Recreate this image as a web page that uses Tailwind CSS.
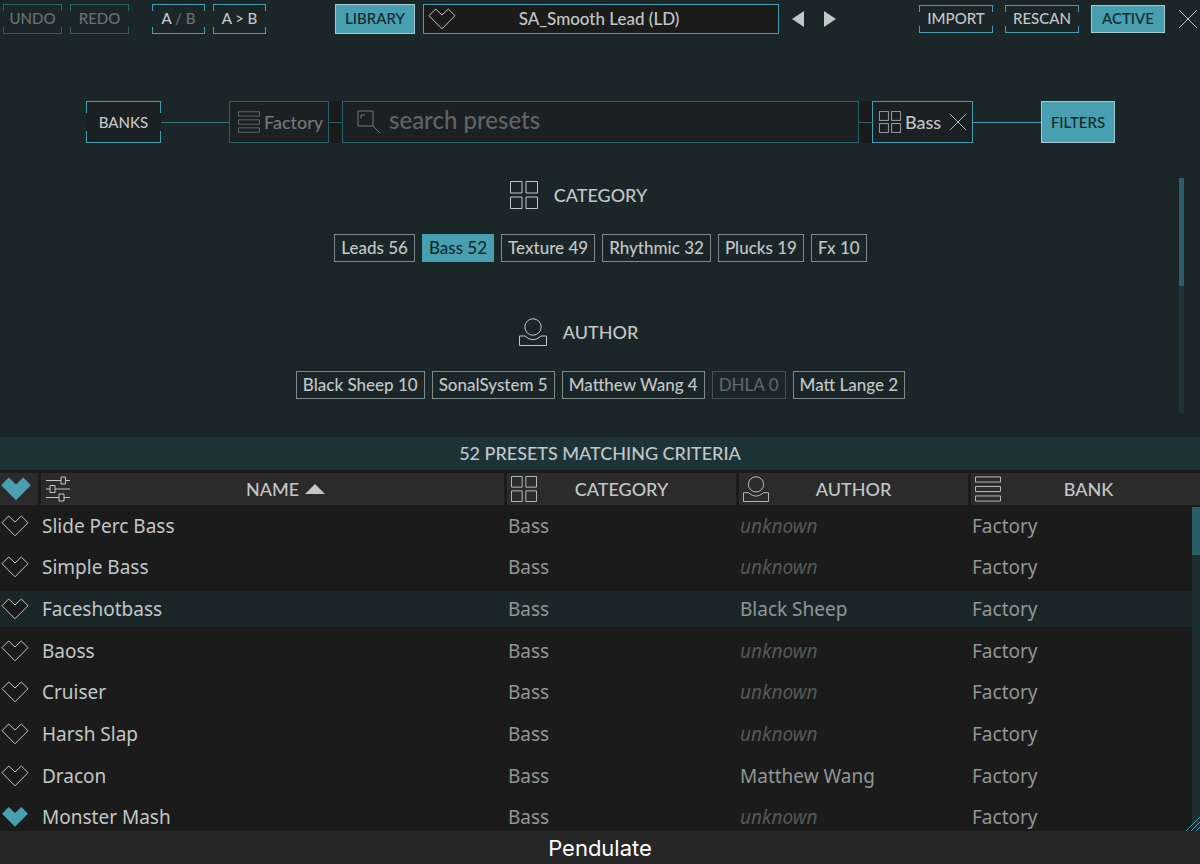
<!DOCTYPE html>
<html lang="en">
<head>
    <meta charset="UTF-8">
    <meta name="viewport" content="width=device-width, initial-scale=1.0">
    <title>Pendulate</title>
    <script src="https://cdn.jsdelivr.net/npm/@tailwindcss/browser@4"></script>
</head>
<body class="h-screen flex flex-col overflow-hidden bg-[#1a2628] text-[#c3c7c7] font-medium font-['Lato',sans-serif]">

    <!-- Icons -->
    <svg class="hidden">
        <symbol id="icon-heart" viewBox="0 0 28 22"><path d="M1 7.7 7.7 1 14 7 20.3 1 27 7.7 14 20.8Z" /></symbol>
        <symbol id="icon-category" viewBox="0 0 28 28"><path d="M.5 .5h11.5v11.5H.5zM16 .5h11.5v11.5H16zM.5 16h11.5v11.5H.5zM16 16h11.5v11.5H16z" /></symbol>
        <symbol id="icon-author" viewBox="0 0 28 28"><circle cx="14" cy="9" r="8.2" /><path d="M.5 18H6Q14 25.500 22 18h5.500v9.500H.5Z" /></symbol>
        <symbol id="icon-bank" viewBox="0 0 28 28"><path d="M.5 1h27v5.500H.5zM.5 11.250h27v5.500H.5zM.5 21.500h27v5.500H.5z" /></symbol>
        <symbol id="icon-sliders" viewBox="0 0 26 26"><path d="M1 4.500h15M20.500 4.500H25M16 1h4.500v7H16zM1 13h4M10 13h15M5 9.500h5v7H5zM1 21.500h13M19 21.500h6M14 18h5v7h-5z" /></symbol>
        <symbol id="icon-close" viewBox="0 0 20 20"><path d="M1 1 19 19M19 1 1 19" /></symbol>
    </svg>

    <!-- Top bar -->
    <header class="flex items-center h-[37px] pl-[3px] text-[15px] leading-5">
        <div class="flex gap-2">
            <button disabled class="relative isolate w-[59px] h-[30px] pb-0.5 border border-[#2b5f68] text-[#697273] before:absolute before:-z-10 before:-inset-x-px before:inset-y-[6px] before:bg-[#1a2628]">UNDO</button>
            <button disabled class="relative isolate w-[59px] h-[30px] pb-0.5 border border-[#2b5f68] text-[#697273] before:absolute before:-z-10 before:-inset-x-px before:inset-y-[6px] before:bg-[#1a2628]">REDO</button>
        </div>
        <div class="flex gap-2 ml-[23px]">
            <button class="relative isolate w-[53px] h-[30px] pb-0.5 border border-[#489fb0] before:absolute before:-z-10 before:-inset-x-px before:inset-y-[6px] before:bg-[#1a2628]">A <span class="text-[#697273]">/ B</span></button>
            <button class="relative isolate w-[53px] h-[30px] pb-0.5 border border-[#489fb0] before:absolute before:-z-10 before:-inset-x-px before:inset-y-[6px] before:bg-[#1a2628]">A &gt; B</button>
        </div>
        <button class="ml-[69px] w-20 h-[30px] pb-0.5 border border-[#a9c9cf] bg-[#489fb0] text-[#12292e]">LIBRARY</button>
        <div class="flex-1 flex items-center ml-2 h-[30px] px-1 border border-[#489fb0] bg-[#1b1b1b]">
            <button aria-label="Favourite"><svg class="w-7 h-[22px] fill-none stroke-current"><use href="#icon-heart" /></svg></button>
            <span class="flex-1 pr-8 text-center text-[17px] leading-6">SA_Smooth Lead (LD)</span>
        </div>
        <button aria-label="Previous preset" class="ml-[13px]"><svg class="w-3 h-4 fill-current" viewBox="0 0 12 16"><path d="M12 0v16L0 8z" /></svg></button>
        <button aria-label="Next preset" class="ml-5"><svg class="w-3 h-4 fill-current" viewBox="0 0 12 16"><path d="M0 0v16l12-8z" /></svg></button>
        <div class="flex gap-3 ml-[83px]">
            <button class="relative isolate w-[74px] h-7 pb-0.5 border border-[#489fb0] before:absolute before:-z-10 before:-inset-x-px before:inset-y-[6px] before:bg-[#1a2628]">IMPORT</button>
            <button class="relative isolate w-[74px] h-7 pb-0.5 border border-[#489fb0] before:absolute before:-z-10 before:-inset-x-px before:inset-y-[6px] before:bg-[#1a2628]">RESCAN</button>
            <button class="w-[74px] h-7 pb-0.5 border border-[#a9c9cf] bg-[#489fb0] text-[#12292e]">ACTIVE</button>
        </div>
        <button aria-label="Close" class="ml-[13px] mr-0.5"><svg class="w-5 h-5 fill-none stroke-current"><use href="#icon-close" /></svg></button>
    </header>

    <!-- Search row -->
    <div class="flex items-center mt-16 pl-[86px] pr-[85px]">
        <button class="relative isolate w-[75px] h-[42px] border border-[#489fb0] bg-[#1b2022] text-[15px] before:absolute before:-z-10 before:-inset-x-px before:inset-y-[11px] before:bg-[#1b2022]">BANKS</button>
        <div class="w-[68px] h-px bg-[#37757f]"></div>
        <button class="flex items-center gap-1 w-[100px] h-[42px] pl-2 border border-[#2b5f68] bg-[#1b2022] text-[#737878] text-lg">
            <svg class="shrink-0 size-[22px] fill-none stroke-current"><use href="#icon-bank" /></svg>Factory
        </button>
        <div class="flex items-center w-[13px] h-[42px] bg-[#1b1b1b]"><div class="w-full h-px bg-[#2b5f68]"></div></div>
        <label class="flex-1 flex items-center h-[42px] pl-3.5 border border-[#2b5f68] bg-[#1b2022] text-[#737878]">
            <svg class="shrink-0 size-6 fill-none stroke-current" viewBox="0 0 24 24"><path d="M1 1h15v15H1zM16 16l7 7M4 8.500V5h4" /></svg>
            <input type="text" placeholder="search presets" aria-label="Search presets" class="flex-1 min-w-0 ml-2 pb-1 bg-transparent text-2xl outline-none placeholder:text-[#5f6566]">
        </label>
        <div class="flex items-center w-[13px] h-[42px] bg-[#1b1b1b]"><div class="w-full h-px bg-[#2b5f68]"></div></div>
        <button class="flex items-center gap-1 w-[101px] h-[42px] pl-1.5 border border-[#489fb0] bg-[#1b2022] text-lg">
            <svg class="shrink-0 size-[22px] fill-none stroke-current"><use href="#icon-category" /></svg>Bass
            <svg class="shrink-0 ml-1 size-[18px] fill-none stroke-current"><use href="#icon-close" /></svg>
        </button>
        <div class="w-[68px] h-px bg-[#489fb0]"></div>
        <button class="w-[74px] h-[42px] border border-[#a9c9cf] bg-[#489fb0] text-[#12292e] text-[15px]">FILTERS</button>
    </div>

    <!-- Filters -->
    <div class="flex mt-[35px] mb-6">
        <div class="flex-1 pl-[22px] h-[235px]">
            <section class="h-[137px]">
                <h2 class="flex items-center justify-center gap-4 h-[34px] pr-11 text-lg">
                    <svg class="size-7 fill-none stroke-current"><use href="#icon-category" /></svg>CATEGORY
                </h2>
                <div id="category-chips" class="flex justify-center gap-[7px] mt-[22px]"></div>
            </section>
            <section>
                <h2 class="flex items-center justify-center gap-4 h-[34px] pr-11 text-lg">
                    <svg class="size-7 fill-none stroke-current"><use href="#icon-author" /></svg>AUTHOR
                </h2>
                <div id="author-chips" class="flex justify-center gap-[7px] mt-[22px]"></div>
            </section>
        </div>
        <div class="w-[5px] mr-4 bg-[#1e3337]"><div class="h-[108px] bg-[#2b5f68]"></div></div>
    </div>

    <p class="h-[33px] bg-[#1e3337] text-center text-lg leading-[33px]">52 PRESETS MATCHING CRITERIA</p>

    <!-- Preset list -->
    <main class="relative flex-1 min-h-0 overflow-hidden bg-[#1b1b1b]">
        <table class="w-full h-[368px] table-fixed border-separate border-spacing-0">
            <thead class="text-lg">
                <tr class="h-[35px]">
                    <th class="w-[38px] p-0 border-t-3 border-[#1b1b1b] bg-[#2b2b2b]">
                        <button aria-label="Favourites" class="block"><svg class="w-8 h-[26px] fill-[#489fb0]" viewBox="0 0 28 22"><use href="#icon-heart" /></svg></button>
                    </th>
                    <th class="p-0 border-t-3 border-l-3 border-[#1b1b1b] bg-[#2b2b2b] font-medium">
                        <div class="flex items-center pl-1">
                            <svg class="size-[26px] fill-none stroke-current"><use href="#icon-sliders" /></svg>
                            <button class="flex-1 flex items-center justify-center gap-1.5 pr-1">NAME <svg class="w-5 h-2.5 fill-current" viewBox="0 0 20 10"><path d="M10 0 20 10H0z" /></svg></button>
                        </div>
                    </th>
                    <th class="w-[232px] p-0 border-t-3 border-l-3 border-[#1b1b1b] bg-[#2b2b2b] font-medium">
                        <div class="flex items-center pl-1">
                            <svg class="size-[26px] fill-none stroke-current"><use href="#icon-category" /></svg>
                            <button class="flex-1 pr-[30px]">CATEGORY</button>
                        </div>
                    </th>
                    <th class="w-[232px] p-0 border-t-3 border-l-3 border-[#1b1b1b] bg-[#2b2b2b] font-medium">
                        <div class="flex items-center pl-1">
                            <svg class="size-[26px] fill-none stroke-current"><use href="#icon-author" /></svg>
                            <button class="flex-1 pr-[30px]">AUTHOR</button>
                        </div>
                    </th>
                    <th class="w-[232px] p-0 border-t-3 border-l-3 border-[#1b1b1b] bg-[#2b2b2b] font-medium">
                        <div class="flex items-center pl-1">
                            <svg class="size-[26px] fill-none stroke-current"><use href="#icon-bank" /></svg>
                            <button class="flex-1 pr-6">BANK</button>
                        </div>
                    </th>
                </tr>
            </thead>
            <tbody id="preset-rows" class="font-normal font-['Noto_Sans',sans-serif] text-[19px] leading-6"></tbody>
        </table>
        <!-- Scrollbar -->
        <div class="absolute right-0 top-[37px] bottom-0 w-2 bg-[#1c2e31]"><div class="h-12 bg-[#2b5f68]"></div></div>
        <svg class="absolute right-0 bottom-0 size-3.5 fill-none stroke-[#489fb0]" viewBox="0 0 14 14"><path d="M0 14 14 0M5 14l9-9M10 14l4-4" /></svg>
    </main>

    <footer class="h-[33px] bg-[#262626] text-center font-normal text-white text-[22px] leading-[34px] font-['Inter',sans-serif]">Pendulate</footer>

    <script>
        const categories = [['Leads', 56], ['Bass', 52], ['Texture', 49], ['Rhythmic', 32], ['Plucks', 19], ['Fx', 10]];
        const authors = [['Black Sheep', 10], ['SonalSystem', 5], ['Matthew Wang', 4], ['DHLA', 0], ['Matt Lange', 2]];
        const selectedCategory = 'Bass';

        const presets = [
            { name: 'Slide Perc Bass' },
            { name: 'Simple Bass' },
            { name: 'Faceshotbass', author: 'Black Sheep', selected: true },
            { name: 'Baoss' },
            { name: 'Cruiser' },
            { name: 'Harsh Slap' },
            { name: 'Dracon', author: 'Matthew Wang' },
            { name: 'Monster Mash', favourite: true }
        ];

        function chip([label, count]) {
            let style = 'border-[#7f8a8b]';
            if (label === selectedCategory) style = 'border-[#489fb0] bg-[#489fb0] text-[#12292e]';
            if (count === 0) style = 'border-[#465153] text-[#5d6768]';
            return `<button class="h-7 px-1.5 border text-[17px] leading-6 ${style}">${label} ${count}</button>`;
        }

        function row(preset) {
            const cell = 'p-0 pl-1 border-y-3 border-transparent bg-clip-padding ' + (preset.selected ? 'bg-[#1a2628]' : '');
            const heart = preset.favourite ? 'fill-[#489fb0]' : 'fill-[#1b1b1b] stroke-current';
            return `
                <tr>
                    <td class="${cell}"><button aria-label="Favourite" class="block -ml-1 pl-px"><svg class="w-7 h-[22px] ${heart}"><use href="#icon-heart" /></svg></button></td>
                    <td class="${cell}">${preset.name}</td>
                    <td class="${cell} text-[#929696]">Bass</td>
                    <td class="${cell} ${preset.author ? 'text-[#929696]' : 'italic text-[#575757]'}">${preset.author || 'unknown'}</td>
                    <td class="${cell} text-[#929696]">Factory</td>
                </tr>`;
        }

        document.getElementById('category-chips').innerHTML = categories.map(chip).join('');
        document.getElementById('author-chips').innerHTML = authors.map(chip).join('');
        document.getElementById('preset-rows').innerHTML = presets.map(row).join('');
    </script>
</body>
</html>
